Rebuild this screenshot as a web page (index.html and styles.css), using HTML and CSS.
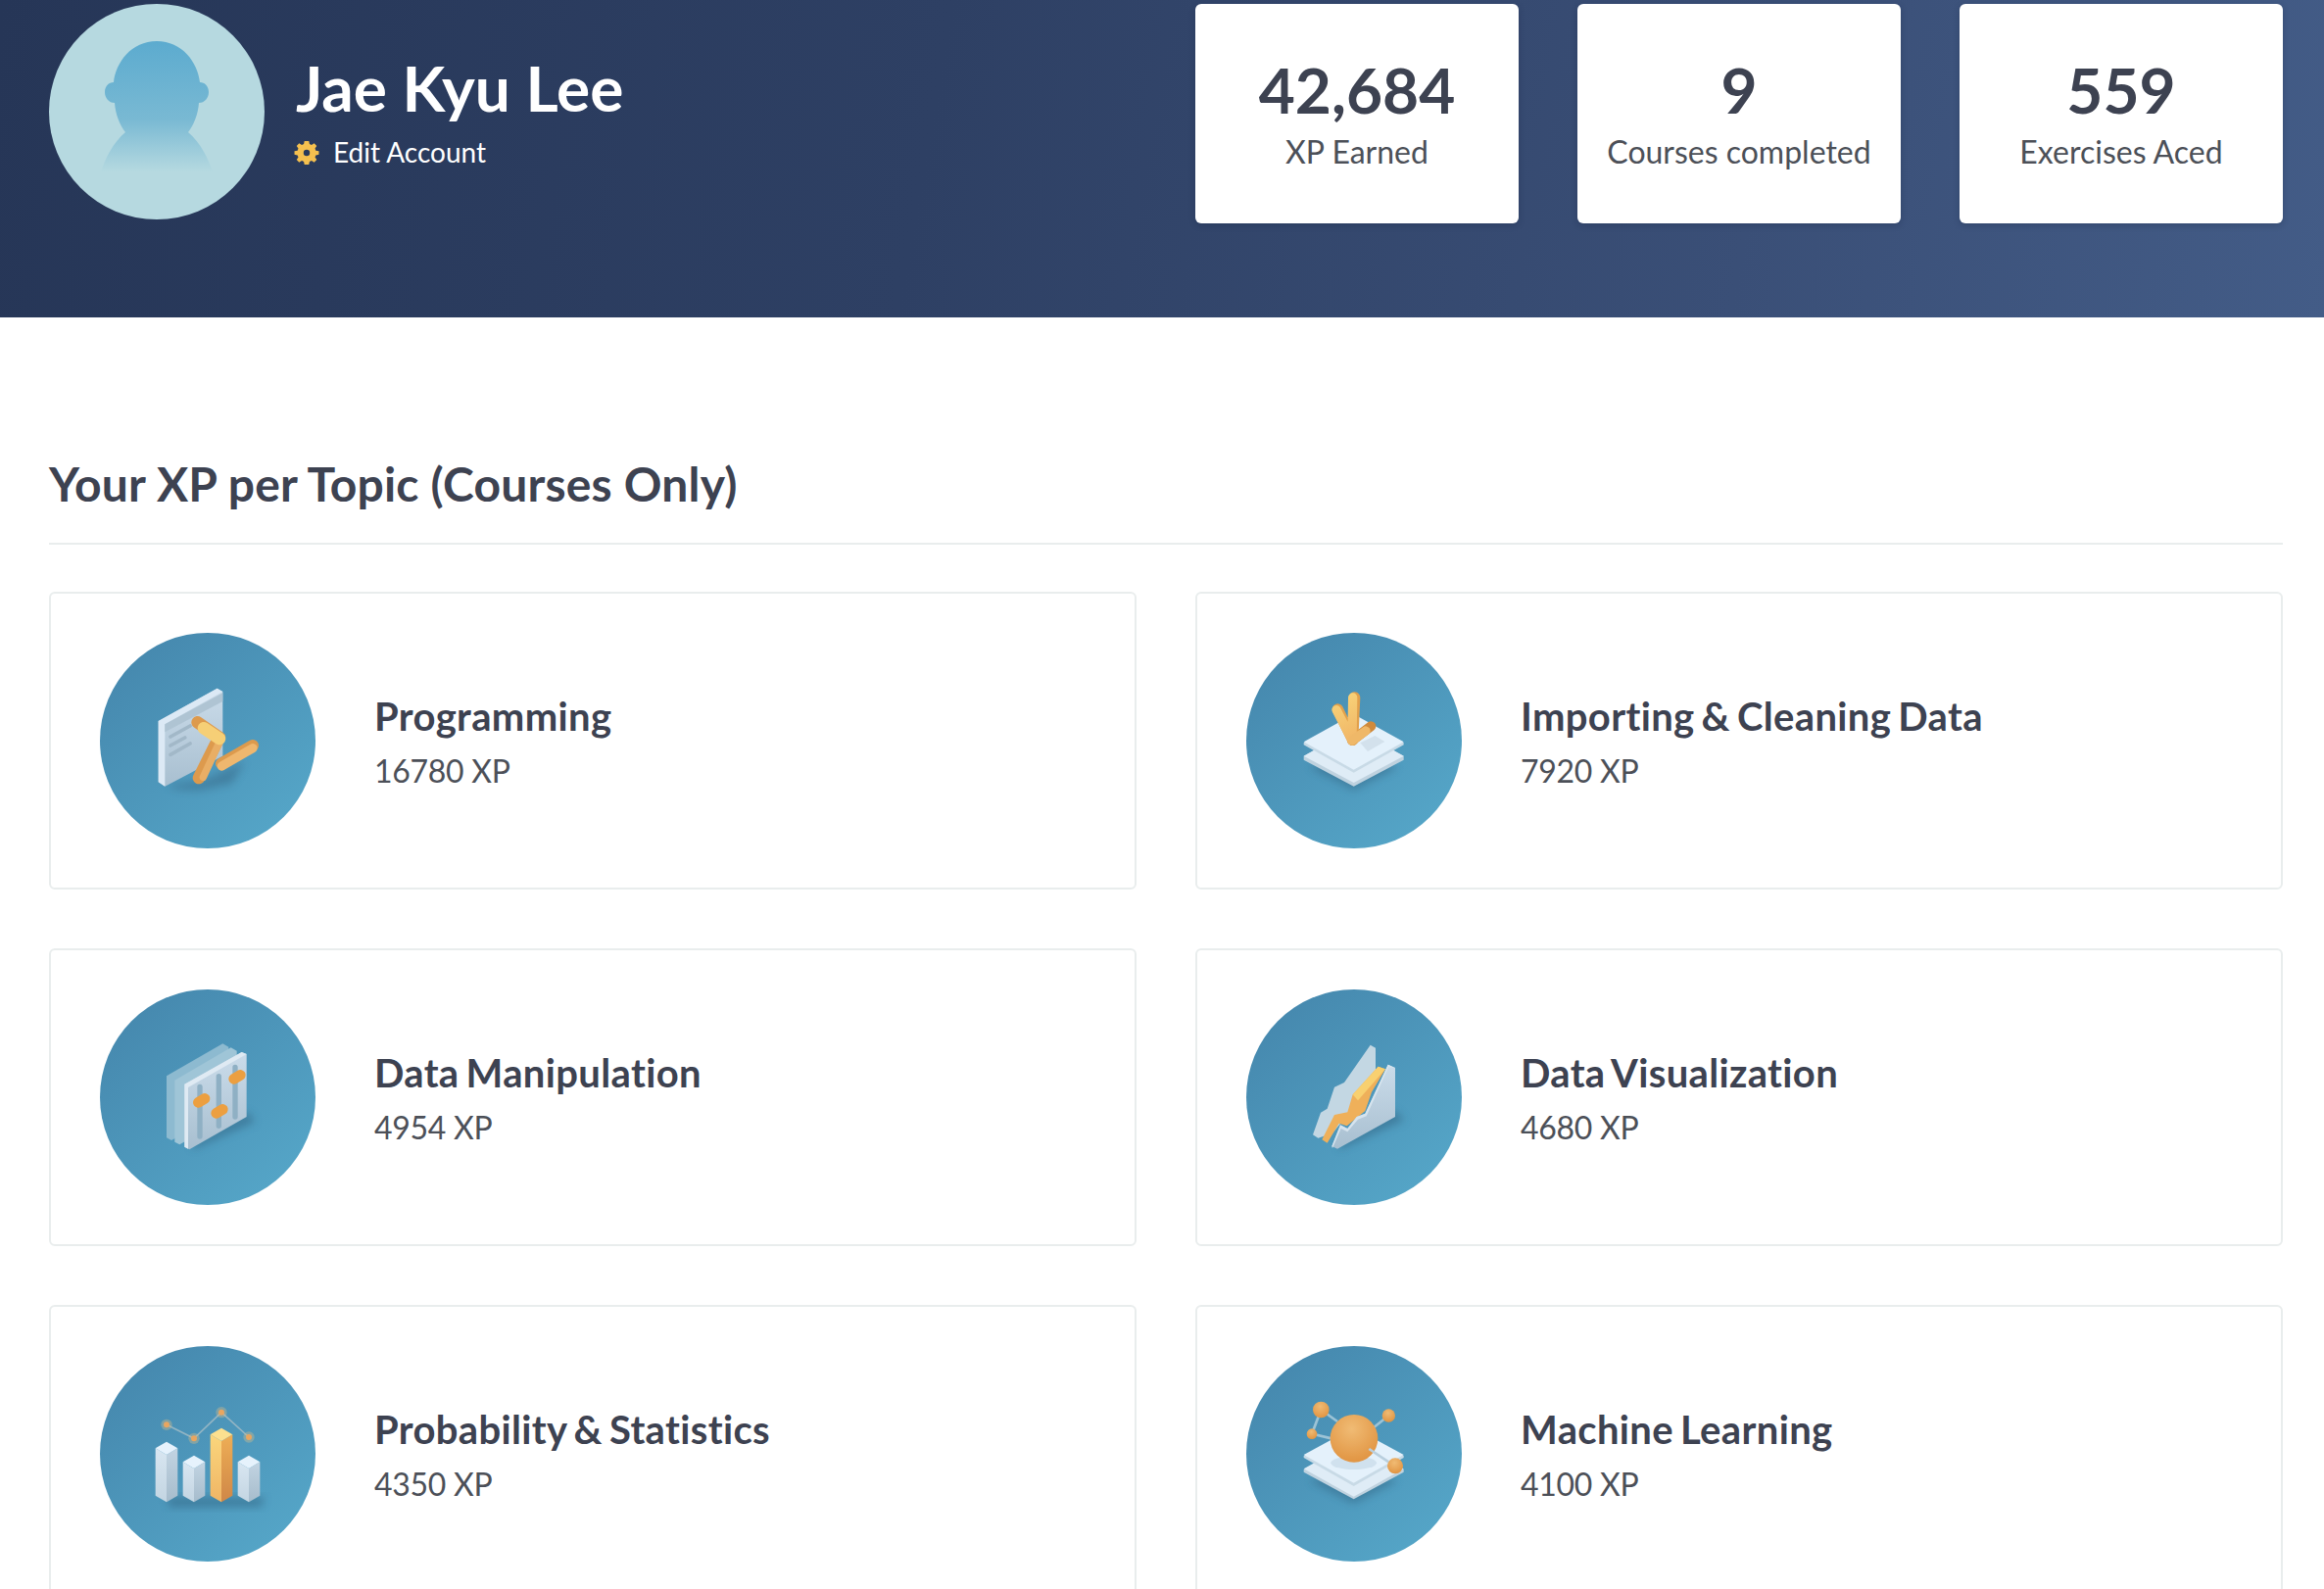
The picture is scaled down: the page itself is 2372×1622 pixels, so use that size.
FILE: index.html
```html
<!DOCTYPE html>
<html lang="en">
<head>
<meta charset="utf-8">
<title>Jae Kyu Lee</title>
<link rel="stylesheet" href="styles.css">
</head>
<body>
<svg class="defs" aria-hidden="true">
  <defs>
    <linearGradient id="disc" x1="0.1" y1="0.05" x2="0.85" y2="0.95"><stop offset="0" stop-color="#4587ad"/><stop offset="1" stop-color="#55a6c8"/></linearGradient>
    <linearGradient id="head" x1="0" y1="0" x2="0" y2="1"><stop offset="0" stop-color="#5cabcf"/><stop offset="0.6" stop-color="#79b9d3"/><stop offset="1" stop-color="#b5d9e0"/></linearGradient>
    <linearGradient id="panel" x1="0" y1="0" x2="0" y2="1"><stop offset="0" stop-color="#cbdcea"/><stop offset="1" stop-color="#a8bfd0"/></linearGradient>
    <linearGradient id="paleL" x1="0" y1="0" x2="0" y2="1"><stop offset="0" stop-color="#d8e6f1"/><stop offset="1" stop-color="#c3d5e2"/></linearGradient>
    <linearGradient id="paleR" x1="0" y1="0" x2="0" y2="1"><stop offset="0" stop-color="#c2d4e2"/><stop offset="1" stop-color="#a6bccc"/></linearGradient>
    <linearGradient id="goldL" x1="0" y1="0" x2="0" y2="1"><stop offset="0" stop-color="#fbd67c"/><stop offset="1" stop-color="#efb565"/></linearGradient>
    <linearGradient id="goldR" x1="0" y1="0" x2="0" y2="1"><stop offset="0" stop-color="#eeae55"/><stop offset="1" stop-color="#cf8748"/></linearGradient>
    <linearGradient id="gold" gradientUnits="userSpaceOnUse" x1="330" y1="240" x2="400" y2="390"><stop offset="0" stop-color="#f8d277"/><stop offset="1" stop-color="#efb064"/></linearGradient>
    <radialGradient id="ball" cx="0.45" cy="0.3" r="0.75"><stop offset="0" stop-color="#f0bb74"/><stop offset="1" stop-color="#e0923f"/></radialGradient>
    <filter id="soft" x="-10%" y="-10%" width="120%" height="120%"><feGaussianBlur stdDeviation="1.6"/></filter>
    <filter id="shade" x="-50%" y="-50%" width="200%" height="200%"><feGaussianBlur stdDeviation="12"/></filter>
  </defs>
</svg>

<header class="hero">
  <div class="identity">
    <svg class="avatar" viewBox="0 0 220 220" role="img" aria-label="Avatar">
      <circle cx="110" cy="110" r="110" fill="#b6d9e0"/>
      <path fill="url(#head)" d="M110 38c-26 0-42 22-44 42-5 0-9 4-9 10s4 11 10 11c1 12 5 22 11 30-13 11-20 26-25 40h114c-5-14-12-29-25-40 6-8 10-18 11-30 6 0 10-5 10-11s-4-10-9-10c-2-20-18-42-44-42z"/>
    </svg>
    <div class="who">
      <h1 class="name">Jae Kyu Lee</h1>
      <a class="edit">
        <svg class="gear" viewBox="0 0 24 24" aria-hidden="true"><path fill="#f5c04f" fill-rule="evenodd" d="M9.500 0h5l.7 3.400 2.200.9 3-1.900 2.800 3-1.900 2.900.9 2.200 3.400.7v3.800l-3.400.7-.9 2.200 1.900 2.900-2.800 3-3-1.900-2.200.9-.7 3.400h-5l-.7-3.400-2.200-.9-3 1.900-2.800-3 1.900-2.900-.9-2.200L-1.600 15v-3.800l3.400-.7.9-2.200L.8 5.400l2.800-3 3 1.900 2.200-.9zM12 9.500a3.500 3.500 0 1 0 0 7 3.500 3.500 0 0 0 0-7z"/></svg>
        <span>Edit Account</span>
      </a>
    </div>
  </div>
  <div class="stats">
    <div class="stat"><div class="stat-num">42,684</div><div class="stat-label">XP Earned</div></div>
    <div class="stat"><div class="stat-num">9</div><div class="stat-label">Courses completed</div></div>
    <div class="stat"><div class="stat-num">559</div><div class="stat-label">Exercises Aced</div></div>
  </div>
</header>

<main class="content">
  <h2 class="section-title">Your XP per Topic (Courses Only)</h2>
  <div class="topics">

    <article class="topic">
      <svg class="disc" viewBox="36 48 660 660" role="img" aria-label="Programming icon">
        <circle cx="366" cy="378" r="330" fill="url(#disc)"/>
        <path d="M240 515l110-15 130-60-40 70-100 20-60-2z" fill="#31617f" opacity=".45" filter="url(#shade)"/>
        <g filter="url(#soft)">
          <path d="M215 318L395 218l17 10v197L235 518l-20-13z" fill="url(#panel)"/>
          <path d="M215 318L395 218l17 10L235 328v190l-20-13z" fill="#dce9f5"/>
          <path d="M235 328L412 232v26L235 352z" fill="#afc4d3"/>
          <g stroke="#a2b8c8" stroke-width="11" stroke-linecap="round" fill="none">
            <path d="M252 366l60-33M252 393l44-24M252 421l60-34"/>
          </g>
          <path d="M335 322l66 46-62 124" fill="none" stroke="#dd9a4e" stroke-width="38" stroke-linecap="round" stroke-linejoin="round"/>
          <path d="M352 490l54-116" fill="none" stroke="#e9ae65" stroke-width="22" stroke-linecap="round"/>
          <path d="M354 340l48 32" fill="none" stroke="#f6cf76" stroke-width="38" stroke-linecap="round"/>
          <path d="M408 448l96-55" fill="none" stroke="#dc9a4d" stroke-width="36" stroke-linecap="round"/>
          <path d="M409 456l95-55" fill="none" stroke="#efb76e" stroke-width="28" stroke-linecap="round"/>
        </g>
      </svg>
      <div class="topic-text"><h3 class="topic-name">Programming</h3><div class="topic-xp">16780 XP</div></div>
    </article>

    <article class="topic">
      <svg class="disc" viewBox="36 48 660 660" role="img" aria-label="Importing and cleaning data icon">
        <circle cx="366" cy="378" r="330" fill="url(#disc)"/>
        <path d="M230 460l135 70 135-70-135-45z" fill="#2f5f7d" opacity=".45" filter="url(#shade)"/>
        <g filter="url(#soft)">
          <path d="M212 425L365 340l153 85v12L365 518 212 437z" fill="#bfd2df"/>
          <path d="M212 425L365 340l153 85-153 82z" fill="#dfecf6"/>
          <path d="M212 385L365 300l153 85v6L365 476 212 391z" fill="#c8dae6"/>
          <path d="M212 382L365 297l153 85-153 85z" fill="#e4f1fb"/>
          <path d="M385 385l45-22 30 18-52 30z" fill="#d3e1ec"/>
          <path d="M360 378l58-44" fill="none" stroke="#cf8a3c" stroke-width="30" stroke-linecap="round"/>
          <path d="M316 282l46 94 6-130" fill="none" stroke="#e2a04b" stroke-width="34" stroke-linecap="round" stroke-linejoin="round"/>
          <path d="M312 284l48 92 2-130" fill="none" stroke="url(#gold)" stroke-width="28" stroke-linecap="round" stroke-linejoin="round"/>
          <path d="M360 378l42-30" fill="none" stroke="#efb868" stroke-width="28" stroke-linecap="round"/>
        </g>
      </svg>
      <div class="topic-text"><h3 class="topic-name">Importing &amp; Cleaning Data</h3><div class="topic-xp">7920 XP</div></div>
    </article>

    <article class="topic">
      <svg class="disc" viewBox="36 30 660 660" role="img" aria-label="Data manipulation icon">
        <circle cx="366" cy="360" r="330" fill="url(#disc)"/>
        <path d="M320 520l190-85-20-30-170 90z" fill="#2f5f7d" opacity=".5" filter="url(#shade)"/>
        <g filter="url(#soft)">
          <path d="M240 295L412 196l18 10v190L255 492l-15-8z" fill="#8dbad0"/>
          <path d="M265 308L437 208l18 10v190L280 505l-15-8z" fill="#9fc5d7"/>
          <path d="M295 320L470 222l15 6v192L310 520l-15-8z" fill="url(#panel)"/>
          <path d="M295 320L470 222l15 6-179 102v188l-11-6z" fill="#dfeaf3"/>
          <g stroke="#8fb0c4" stroke-width="16" stroke-linecap="round" fill="none">
            <path d="M342 328v152M400 296v152M450 268v152"/>
          </g>
          <g stroke="#ec9f3f" stroke-width="32" stroke-linecap="round" fill="none">
            <path d="M337 376l20-12M392 409l20-12M446 304l20-12"/>
          </g>
        </g>
      </svg>
      <div class="topic-text"><h3 class="topic-name">Data Manipulation</h3><div class="topic-xp">4954 XP</div></div>
    </article>

    <article class="topic">
      <svg class="disc" viewBox="36 30 660 660" role="img" aria-label="Data visualization icon">
        <circle cx="366" cy="360" r="330" fill="url(#disc)"/>
        <path d="M320 520l200-90-30-30-170 90z" fill="#2f5f7d" opacity=".5" filter="url(#shade)"/>
        <g filter="url(#soft)">
          <path d="M240 475l24-68 20-12 22-66 30-14 80-115 16 9v100L300 470l-44 15z" fill="#c3d7e3"/>
          <path d="M268 490l38-76 40-8 16-54 78-86 22 8-42 70-20 58-56 46-24-8-36 60z" fill="#efb05a"/>
          <path d="M362 352l78-86 22 8-84 96z" fill="#f8d070"/>
          <path d="M298 510l26-65 22 11 28-36 26-10 70-150 22 10v150L315 518z" fill="url(#panel)"/>
          <path d="M298 510l26-65 22 11 28-36 26-10 70-150 22 10-20-2-68 150-26 10-32 38-20-10-26 60z" fill="#d6e4ee"/>
        </g>
      </svg>
      <div class="topic-text"><h3 class="topic-name">Data Visualization</h3><div class="topic-xp">4680 XP</div></div>
    </article>

    <article class="topic">
      <svg class="disc" viewBox="36 27 660 660" role="img" aria-label="Probability and statistics icon">
        <circle cx="366" cy="357" r="330" fill="url(#disc)"/>
        <path d="M240 490l300 0-10 30-280 0z" fill="#2f5f7d" opacity=".5" filter="url(#shade)"/>
        <g filter="url(#soft)">
          <path d="M240 268l84 42 84-80 84 76" fill="none" stroke="#93b5c4" stroke-width="5"/>
          <g fill="#e3c187" fill-opacity=".35"><circle cx="240" cy="268" r="17"/><circle cx="324" cy="310" r="17"/><circle cx="408" cy="230" r="17"/><circle cx="492" cy="306" r="17"/></g>
          <g fill="#e9a661"><circle cx="240" cy="268" r="9"/><circle cx="324" cy="310" r="9"/><circle cx="408" cy="230" r="9"/><circle cx="492" cy="306" r="9"/></g>
          <path d="M206 340l34 20v145l-34-20z" fill="url(#paleL)"/><path d="M240 360l34-20v145l-34 20z" fill="url(#paleR)"/><path d="M206 340l34-20 34 20-34 20z" fill="#e6f2fc"/>
          <path d="M290 382l34 20v103l-34-20z" fill="url(#paleL)"/><path d="M324 402l34-20v103l-34 20z" fill="url(#paleR)"/><path d="M290 382l34-20 34 20-34 20z" fill="#e6f2fc"/>
          <path d="M374 298l34 20v187l-34-20z" fill="url(#goldL)"/><path d="M408 318l34-20v187l-34 20z" fill="url(#goldR)"/><path d="M374 298l34-20 34 20-34 20z" fill="#fce08f"/>
          <path d="M458 382l34 20v103l-34-20z" fill="url(#paleL)"/><path d="M492 402l34-20v103l-34 20z" fill="url(#paleR)"/><path d="M458 382l34-20 34 20-34 20z" fill="#e6f2fc"/>
        </g>
      </svg>
      <div class="topic-text"><h3 class="topic-name">Probability &amp; Statistics</h3><div class="topic-xp">4350 XP</div></div>
    </article>

    <article class="topic">
      <svg class="disc" viewBox="36 27 660 660" role="img" aria-label="Machine learning icon">
        <circle cx="366" cy="357" r="330" fill="url(#disc)"/>
        <path d="M230 440l135 70 135-70-135-45z" fill="#2f5f7d" opacity=".45" filter="url(#shade)"/>
        <g filter="url(#soft)">
          <path d="M212 405L365 320l153 85v8L365 496 212 413z" fill="#bfd2df"/>
          <path d="M212 403L365 318l153 85-153 85z" fill="#dfecf6"/>
          <path d="M212 363L365 280l153 83v6L365 456 212 369z" fill="#c8dae6"/>
          <path d="M212 360L365 277l153 83-153 86z" fill="#e4f1fb"/>
          <ellipse cx="365" cy="385" rx="70" ry="20" fill="#b9cfde" opacity=".45"/>
          <g stroke="#9cc3d6" stroke-width="8" fill="none">
            <path d="M265 222l-28 74 60 14M265 222l50 36M472 240l-50 40"/>
          </g>
          <circle cx="366" cy="310" r="73" fill="url(#ball)"/>
          <path d="M412 342l60 40" stroke="#b9cfde" stroke-width="8" fill="none"/>
          <circle cx="265" cy="222" r="25" fill="url(#ball)"/>
          <circle cx="237" cy="296" r="16" fill="url(#ball)"/>
          <circle cx="472" cy="240" r="20" fill="url(#ball)"/>
          <circle cx="492" cy="394" r="24" fill="url(#ball)"/>
        </g>
      </svg>
      <div class="topic-text"><h3 class="topic-name">Machine Learning</h3><div class="topic-xp">4100 XP</div></div>
    </article>

  </div>
</main>
</body>
</html>
```

FILE: styles.css
```css
* { box-sizing: border-box; }
html, body { margin: 0; padding: 0; height: 1622px; overflow: hidden; background: #fff; }
body { font-family: Lato, "Liberation Sans", sans-serif; color: #3d4251; }
.defs { display: block; width: 0; height: 0; }

.hero {
  height: 324px;
  padding: 4px 42px 0 50px;
  display: flex;
  justify-content: space-between;
  align-items: flex-start;
  background: linear-gradient(100deg, #263657 0%, #2e4064 40%, #3a4f77 75%, #435c87 100%);
}
.identity { display: flex; align-items: flex-start; gap: 32px; }
.avatar { display: block; width: 220px; height: 220px; }
.who { padding-top: 46px; }
.name { margin: 0; font-size: 64px; line-height: 80px; font-weight: 700; color: #fff; }
.edit { display: flex; align-items: center; gap: 16px; margin-top: 7px; font-size: 28px; line-height: 36px; color: #fff; }
.gear { display: block; width: 22px; height: 22px; overflow: visible; }

.stats { display: grid; grid-template-columns: repeat(3, 330px); column-gap: 60px; }
.stat {
  height: 224px;
  padding-top: 50px;
  background: #fff;
  border-radius: 6px;
  text-align: center;
  box-shadow: 0 2px 6px rgba(20, 30, 60, .25);
}
.stat-num { font-size: 64px; line-height: 76px; font-weight: 700; color: #3d4251; }
.stat-label { margin-top: 5px; font-size: 32px; line-height: 40px; color: #4c5058; }

.content { padding: 139px 42px 0 50px; }
.section-title {
  margin: 0 0 48px;
  padding-bottom: 29px;
  border-bottom: 2px solid #e9eded;
  font-size: 48px;
  line-height: 62px;
  font-weight: 700;
  letter-spacing: .2px;
  color: #3d4251;
}
.topics { display: grid; grid-template-columns: repeat(2, 1110px); column-gap: 60px; row-gap: 60px; }
.topic {
  height: 304px;
  padding: 40px 50px;
  display: flex;
  align-items: center;
  gap: 60px;
  background: #fff;
  border: 2px solid #e9eded;
  border-radius: 6px;
}
.disc { display: block; flex: none; width: 220px; height: 220px; }
.topic-name { margin: 0; font-size: 40px; line-height: 52px; font-weight: 700; letter-spacing: .35px; word-spacing: -3px; color: #3d4251; }
.topic-xp { margin-top: 10px; font-size: 32px; line-height: 40px; color: #4c5058; letter-spacing: -.3px; }
```
